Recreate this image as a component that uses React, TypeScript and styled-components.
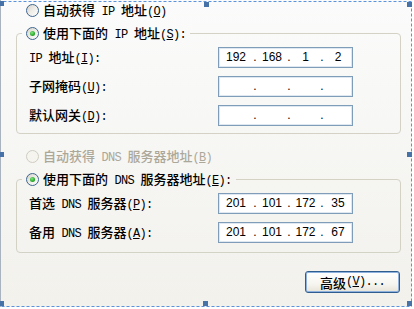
import React from 'react';
import styled, { createGlobalStyle } from 'styled-components';

const Global = createGlobalStyle`
  html, body { margin: 0; padding: 0; background: #ffffff; }
  body { font-family: "Noto Sans CJK SC", "Liberation Sans", sans-serif; }
`;

const Canvas = styled.div`
  position: relative;
  width: 414px;
  height: 309px;
  overflow: hidden;
  background: #ffffff;
`;

const Panel = styled.div`
  box-sizing: border-box;
  width: 412px;
  height: 307px;
  padding: 3px 11px 0 15px;
  border-left: 1px solid #a9b3bf;
  background: linear-gradient(180deg, #fbfbfb 0%, #f7f7f5 40%, #f2f1ec 100%);
  display: flex;
  flex-direction: column;
  align-items: stretch;
  font-family: "Noto Sans CJK SC", sans-serif;
  font-size: 13px;
  font-weight: 500;
  color: #000;
`;

// SimSun-like half width latin run
const M = styled.span`
  font-family: "Liberation Mono", monospace;
  font-size: 12px;
  font-weight: 400;
  letter-spacing: -0.7px;
  white-space: pre;
`;

const Text = styled.span<{ $disabled?: boolean }>`
  line-height: 15px;
  white-space: nowrap;
  color: ${p => (p.$disabled ? '#aca899' : '#000')};
`;

const RadioCircle = styled.span<{ $checked?: boolean; $disabled?: boolean }>`
  flex: none;
  box-sizing: border-box;
  width: 13px;
  height: 13px;
  border-radius: 50%;
  border: 1px solid ${p => (p.$disabled ? '#cfcdc2' : '#3d6690')};
  background: ${p =>
    p.$disabled
      ? '#f5f4ef'
      : 'linear-gradient(135deg, #d6d3c9 0%, #eeede8 50%, #ffffff 100%)'};
  display: grid;
  place-items: center;

  &::after {
    content: '';
    display: ${p => (p.$checked ? 'block' : 'none')};
    width: 5px;
    height: 5px;
    border-radius: 50%;
    background: radial-gradient(circle at 40% 35%, #7ee87e 0%, #2aa82a 60%, #1d8f1d 100%);
  }
`;

const RadioRow = styled.div<{ $gapTop?: number }>`
  display: flex;
  align-items: center;
  gap: 4px;
  height: 15px;
  margin: ${p => p.$gapTop ?? 0}px 0 0 10px;
`;

const Group = styled.fieldset<{ $bottom: number }>`
  margin: 8px 0 0 0;
  min-inline-size: auto;
  padding: 6px 0 ${p => p.$bottom}px 5px;
  border: 1px solid #d3d2c4;
  border-radius: 4px;
  display: grid;
  row-gap: 8px;
`;

const Legend = styled.legend`
  padding: 0 4px;
  height: 15px;
  display: flex;
  align-items: center;
  gap: 4px;
`;

const FieldRow = styled.div`
  display: flex;
  align-items: center;
  height: 21px;
`;

const Label = styled.span`
  box-sizing: border-box;
  width: 196px;
  padding-left: 7px;
  line-height: 15px;
  white-space: nowrap;
`;

const IpBox = styled.div`
  box-sizing: border-box;
  width: 135px;
  height: 21px;
  border: 1px solid #7f9db9;
  box-shadow: inset 0 0 0 1px #dfe7f0;
  background: #ffffff;
  display: grid;
  grid-template-columns: 34px 4px 30px 4px 29px 4px 1fr;
  align-items: center;
  font-family: "Liberation Sans", Arial, sans-serif;
  font-size: 12px;
  font-weight: 400;
  color: #000;
`;

const Octet = styled.span`
  text-align: center;
  line-height: 19px;
`;

const Dot = styled.span`
  text-align: center;
  line-height: 19px;
`;

const ButtonBar = styled.div`
  display: flex;
  justify-content: flex-end;
  margin: 18px 1px 0 0;
`;

const XpButton = styled.button`
  box-sizing: border-box;
  width: 95px;
  height: 22px;
  padding: 0;
  border: 1px solid #2f5d8f;
  border-radius: 3px;
  box-shadow: inset 0 0 0 1px #8fb1dd;
  background: linear-gradient(180deg, #ffffff 0%, #f6f5f0 60%, #e6e3d8 100%);
  font-family: "Noto Sans CJK SC", sans-serif;
  font-size: 13px;
  font-weight: 500;
  color: #000;
  display: flex;
  align-items: center;
  justify-content: center;
`;

const Selection = styled.div`
  position: absolute;
  left: -2px;
  top: 1px;
  width: 414px;
  height: 306px;
  pointer-events: none;
`;

const Outline = styled.svg`
  display: block;
`;

const Handle = styled.span<{ $x: number; $y: number }>`
  position: absolute;
  left: ${p => p.$x}px;
  top: ${p => p.$y}px;
  width: 5px;
  height: 5px;
  background: #4672a8;
`;

const handles = [
  [1, 0], [206, 1], [409, 1],
  [1, 151], [409, 151],
  [1, 300], [205, 300], [409, 300],
];

function Ip({ parts }: { parts: string[] }) {
  return (
    <IpBox>
      <Octet>{parts[0]}</Octet>
      <Dot>.</Dot>
      <Octet>{parts[1]}</Octet>
      <Dot>.</Dot>
      <Octet>{parts[2]}</Octet>
      <Dot>.</Dot>
      <Octet>{parts[3]}</Octet>
    </IpBox>
  );
}

export default function App() {
  return (
    <>
      <Global />
      <Canvas>
        <Panel>
          <RadioRow>
            <RadioCircle />
            <Text>自动获得<M> IP </M>地址<M>(<u>O</u>)</M></Text>
          </RadioRow>

          <Group $bottom={7}>
            <Legend>
              <RadioCircle $checked />
              <Text>使用下面的<M> IP </M>地址<M>(<u>S</u>):</M></Text>
            </Legend>
            <FieldRow>
              <Label><M>IP </M>地址<M>(<u>I</u>):</M></Label>
              <Ip parts={['192', '168', '1', '2']} />
            </FieldRow>
            <FieldRow>
              <Label>子网掩码<M>(<u>U</u>):</M></Label>
              <Ip parts={['', '', '', '']} />
            </FieldRow>
            <FieldRow>
              <Label>默认网关<M>(<u>D</u>):</M></Label>
              <Ip parts={['', '', '', '']} />
            </FieldRow>
          </Group>

          <RadioRow $gapTop={15}>
            <RadioCircle $disabled />
            <Text $disabled>自动获得<M> DNS </M>服务器地址<M>(<u>B</u>)</M></Text>
          </RadioRow>

          <Group $bottom={9}>
            <Legend>
              <RadioCircle $checked />
              <Text>使用下面的<M> DNS </M>服务器地址<M>(<u>E</u>):</M></Text>
            </Legend>
            <FieldRow>
              <Label>首选<M> DNS </M>服务器<M>(<u>P</u>):</M></Label>
              <Ip parts={['201', '101', '172', '35']} />
            </FieldRow>
            <FieldRow>
              <Label>备用<M> DNS </M>服务器<M>(<u>A</u>):</M></Label>
              <Ip parts={['201', '101', '172', '67']} />
            </FieldRow>
          </Group>

          <ButtonBar>
            <XpButton>高级<M>(<u>V</u>)...</M></XpButton>
          </ButtonBar>
        </Panel>

        <Selection>
          <Outline width="414" height="306">
            <rect x="0.5" y="0.5" width="413" height="305" fill="none"
              stroke="#5a92dc" strokeWidth="1" strokeDasharray="3 2" />
          </Outline>
          {handles.map(([x, y], i) => (
            <Handle key={i} $x={x} $y={y} />
          ))}
        </Selection>
      </Canvas>
    </>
  );
}
